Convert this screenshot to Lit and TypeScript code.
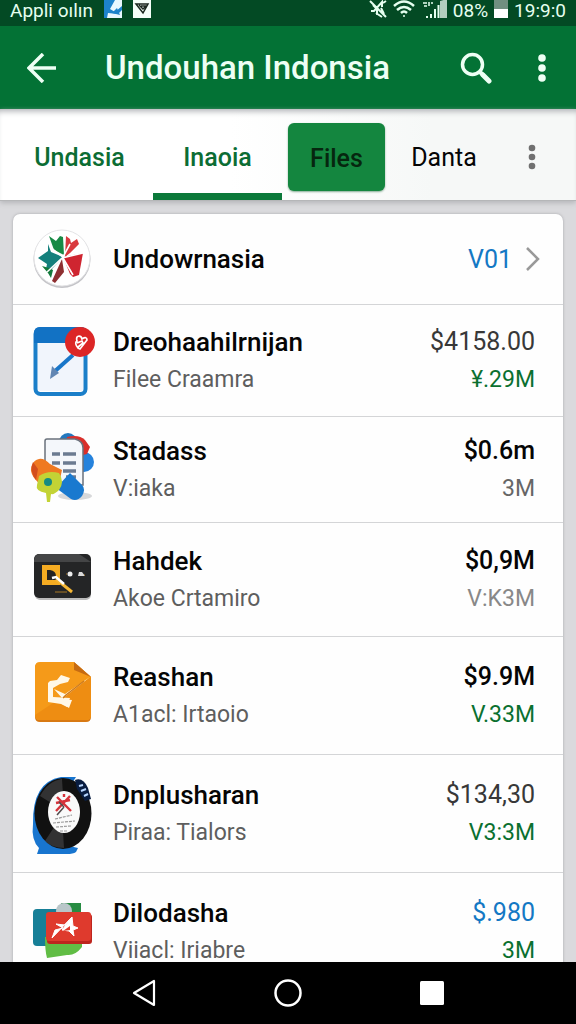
import { LitElement, html, css, svg, nothing } from "lit";
import { customElement, property } from "lit/decorators.js";

interface Entry {
  icon: string;
  title: string;
  note: string;
  amount: string;
  amountTone: string;
  size: string;
  sizeTone: string;
  density: string;
}

const entries: Entry[] = [
  { icon: "notes", title: "Dreohaahilrnijan", note: "Filee Craamra", amount: "$4158.00", amountTone: "dark", size: "¥.29M", sizeTone: "green", density: "regular" },
  { icon: "papers", title: "Stadass", note: "V:iaka", amount: "$0.6m", amountTone: "strong", size: "3M", sizeTone: "gray", density: "snug" },
  { icon: "box", title: "Hahdek", note: "Akoe Crtamiro", amount: "$0,9M", amountTone: "strong", size: "V:K3M", sizeTone: "pale", density: "medium" },
  { icon: "sketch", title: "Reashan", note: "A1acl: Irtaoio", amount: "$9.9M", amountTone: "strong", size: "V.33M", sizeTone: "green", density: "roomy" },
  { icon: "record", title: "Dnplusharan", note: "Piraa: Tialors", amount: "$134,30", amountTone: "dark", size: "V3:3M", sizeTone: "green", density: "roomy" },
  { icon: "cards", title: "Dilodasha", note: "Viiacl: Iriabre", amount: "$.980", amountTone: "blue", size: "3M", sizeTone: "green", density: "roomy" },
];

const pictures: Record<string, unknown> = {
  star: svg`
    <circle cx="32" cy="40.500" r="28.500" fill="#c4c4c8"/>
    <circle cx="32" cy="39" r="28" fill="#fff" stroke="#e4e4e6"/>
    <path d="M19 17l7 5 4-5 3 1 1 18-10-5z" fill="#188a45"/>
    <path d="M36 17l4 3 1 4 6-4 2 5-9 9-5 4z" fill="#d93a3e"/>
    <path d="M18 25l3 8 12 5-12 13-5-1 1-5-9-6 10-7z" fill="#14807c"/>
    <path d="M33 38l20-4-4 22-6 2-3-3z" fill="#cf2530"/>
    <path d="M32 40l2 13-9 11-3-2z" fill="#8e2f31"/>
    <path d="M12 47l7 2 4 2-2 8-3-5z" fill="#137a3b"/>
    <path d="M32 39l21-5M33 39l10 17M33 38l7-13M33 38L21 29M32 39L17 53" stroke="#fff" stroke-width="1.600" fill="none"/>`,
  notes: svg`
    <rect x="5.500" y="8" width="50" height="65" rx="5" fill="#fff" stroke="#1b7fc9" stroke-width="4"/>
    <path d="M4 22V12q0-6 6-6h41q6 0 6 6v10z" fill="#1272c4"/>
    <rect x="8" y="22" width="45" height="48" rx="2" fill="#f1f5fc"/>
    <path d="M43 34L24 51" stroke="#1976c9" stroke-width="4"/>
    <path d="M22 45l7 7-9 6z" fill="#6286b3"/>
    <circle cx="50" cy="21" r="15" fill="#dc2626"/>
    <path d="M48 27q-4-5-1-7c-2-6 4-6 5-2q5-3 5 1l-7 9zM47 22l5-2 1 2-5 4" fill="none" stroke="#fff" stroke-width="1.700"/>`,
  papers: svg`<g transform="translate(0 -3)">
    <ellipse cx="45" cy="69" rx="17" ry="4" fill="#d7d8da"/>
    <circle cx="38" cy="15" r="9" fill="#2378be"/>
    <circle cx="54" cy="35" r="10" fill="#2582dc"/>
    <path d="M37 10q12-3 18 3l5 7-3 7-8 2-13-9z" fill="#d92f2b"/>
    <path d="M17 12h28q8 2 8 9v37H15V14q0-2 2-2z" fill="#f4f7fb" stroke="#69717c" stroke-width="1.500"/>
    <path d="M22 27h8m3 0h13M22 36h8m3 0h13M33 44h13M36 50h10" stroke="#6b7b91" stroke-width="3.500"/>
    <path d="M40 46l12 12q4 4 0 11-5 6-11 3L26 61z" fill="#1979cf"/>
    <path d="M9 32q5-1 11 5l12 6-2 9-20 5Q-2 47 2 38q2-5 7-6z" fill="#ef7921"/>
    <path d="M3 35l5 7-2 11Q-1 44 3 35z" fill="#d34e1d"/>
    <path d="M9 49q9-6 20-3 6 9 0 17-5 5-8 4l-1 8h-3l-1-9Q5 64 7 58z" fill="#c3d335"/>
    <circle cx="18" cy="55" r="4" fill="#168b82"/></g>`,
  box: svg`<g transform="translate(0 -3)">
    <rect x="5" y="20" width="56" height="43" rx="5" fill="#bbb"/>
    <rect x="4" y="17" width="57" height="44" rx="5" fill="#242526"/>
    <path d="M4 25v-2q1-6 6-6h39l12 8z" fill="#444546"/>
    <path d="M12 28h18v20H12z" fill="#f5ac22"/>
    <path d="M17 33h3q6 1 6 6v4h-9z" fill="#272422"/>
    <path d="M26 42l16 13" stroke="#f5b735" stroke-width="3"/>
    <path d="M22 41l4-1 8 7" stroke="#fff" stroke-width="2.500" fill="none"/>
    <circle cx="40" cy="37" r="2.500" fill="#eee"/><path d="M49 35h3l3 4h-7z" fill="#d9d9d9"/>
    <path d="M36 37h1m17 1h1M25 55h12" stroke="#a77924"/></g>`,
  sketch: svg`<g transform="translate(0 -4)">
    <path d="M5 16q0-5 5-5h35l16 14v40q0 5-5 5H10q-5 0-5-5z" fill="#d87913"/>
    <path d="M5 15q0-5 5-5h34l17 15v38q0 5-5 5H10q-5 0-5-5z" fill="#f59a19"/>
    <path d="M44 10v8l17 7z" fill="#c66b12"/>
    <path d="M5 63l15-10 41-28v38q0 5-5 5H10q-5 0-5-5z" fill="#ee8d12"/>
    <path d="M20 29l7-1 4-5 9 3-2 4-8 2-7 4v9l17 1-3 9-6-3-13-2V31z" fill="#fff8e8"/>
    <path d="M60 25L32 47l10 1-3 8-8-5 1-5-8-9 11 5z" fill="#fff8e8"/>
    <path d="M54 29L36 43l-3 3" fill="none" stroke="#cf7a19" stroke-width="1.500"/></g>`,
  record: svg`
    <path d="M31 3h15L35 20 13 54l5 13 30 7-2 4q-3 2-9 2H7l2-6Q1 66 3 50 2 8 31 3z" fill="#1875cf"/>
    <ellipse cx="33" cy="39.500" rx="28.500" ry="35.500" fill="#111"/>
    <path d="M10 22Q18 7 32 5l2 32zM15 67l17-26 2 33Q22 74 15 67z" fill="#5a5b5d" opacity=".45"/>
    <path d="M45 6q8-3 13 8l3 11-6 2-8-12z" fill="#091d41"/>
    <path d="M49 12l4-1m-2 6l5-2m-2 7l4-2" stroke="#b8d7ff" stroke-width="2"/>
    <ellipse cx="34" cy="38" rx="16" ry="21" fill="#fafafa"/>
    <path d="M27 23l14 14M40 22L26 37M34 20v3M26 29l14-3" stroke="#d6333b" stroke-width="2.400"/>
    <path d="M34 33l-7 8m2-13l5 5" stroke="#514b4c" stroke-width="1.500"/>
    <path d="M25 45l17-4M23 49l22-2M26 53l15-1M30 57h8" stroke="#999" stroke-width="1.200" stroke-dasharray="3 1"/>`,
  cards: svg`
    <rect x="3" y="17" width="38" height="37" rx="4" fill="#177f97"/>
    <path d="M31 11h20v38L36 61z" fill="#278c42"/>
    <circle cx="34" cy="19" r="8" fill="#b9c6c9"/>
    <path d="M15 45h37v10q-7 9-15 8l-20 3q-2-7-2-21z" fill="#61bd45"/>
    <rect x="17" y="22" width="45" height="30" rx="3" fill="#bd251e"/>
    <rect x="16" y="20" width="45" height="29" rx="3" fill="#df3a2d"/>
    <path d="M42 25L22 46l3-8 8-2-7-4 9 1 7-8 1 9 5 2-5 2 1 6-5-5-7-1z" fill="#fff" stroke="#fff"/>
    <path d="M33 39l7-5v4z" fill="#df3a2d"/>`,
};

@customElement("list-picture")
class ListPicture extends LitElement {
  @property() name = "";
  static styles = css`
    :host { display: block; }
    .picture { display: block; width: 64px; height: 80px; overflow: visible; }
  `;
  render() {
    return html`<svg class="picture" viewBox="0 0 64 80" aria-hidden="true">${pictures[this.name] ?? nothing}</svg>`;
  }
}

@customElement("app-root")
class AppRoot extends LitElement {
  static styles = css`
    :host {
      display: flex;
      flex-direction: column;
      height: 100vh;
      overflow: hidden;
      background: #dadadd;
      color: #050505;
      font-family: Roboto, "Liberation Sans", sans-serif;
    }
    * { box-sizing: border-box; }
    button { border: 0; padding: 0; background: none; color: inherit; font: inherit; cursor: pointer; }
    svg { display: block; }
    .status {
      flex: none;
      display: flex;
      align-items: flex-start;
      justify-content: space-between;
      height: 26px;
      padding: 0 10px;
      background: #034a24;
      color: #e6fff0;
      font-size: 19px;
      line-height: 22px;
      white-space: nowrap;
    }
    .group { display: flex; align-items: flex-start; gap: 6px; }
    .group.left { gap: 11px; }
    .bar {
      flex: none;
      display: flex;
      align-items: center;
      height: 83px;
      padding: 0 10px 0 18px;
      background: #037235;
      color: #edfff4;
    }
    .heading { flex: 1; margin: 0 0 0 39px; font-size: 33px; line-height: 40px; font-weight: 500; white-space: nowrap; }
    .tool { width: 48px; height: 48px; display: grid; place-items: center; }
    .tools { display: flex; gap: 18px; }
    .tabs {
      flex: none;
      position: relative;
      display: grid;
      grid-template-columns: 147fr 129fr 109fr 106fr 69fr;
      height: 92px;
      padding: 0 10px 0 6px;
      background: linear-gradient(90deg, #fff 40%, #f6f8f7 75%);
      border-bottom: 1px solid #b5b6b8;
      box-shadow: inset 0 6px 6px -4px #a9acb0, 0 2px 5px #b4b5b9;
      font-size: 25px;
    }
    .tab { display: grid; place-items: center; padding-top: 12px; border-bottom: 7px solid transparent; }
    .tab.green { color: #0c6d34; font-weight: 500; }
    .tab.current { border-bottom-color: #0b793a; }
    .tab.chip {
      margin: 14px 6px 9px;
      padding: 2px 0 0;
      border: 0;
      border-radius: 6px;
      background: #14863f;
      color: #06260f;
      font-weight: 500;
      box-shadow: 0 1px 2px #86ad95;
    }
    .tab.more { color: #707070; }
    .content { flex: 1; min-height: 0; overflow: hidden auto; scrollbar-width: none; padding: 13px 13px 0; }
    .card {
      margin: 0;
      padding: 0;
      list-style: none;
      background: #fefefe;
      border-radius: 7px;
      box-shadow: 0 0 3px #a5a6aa;
    }
    .row { display: flex; align-items: center; padding: 0 28px 0 17px; border-bottom: 1px solid #d4d5d7; }
    .row:last-child { border-bottom: 0; }
    .row list-picture { flex: none; height: 80px; margin: -4px 19px -4px 0; }
    .row.first { height: 91px; padding-right: 23px; }
    .row.snug { padding-block: 15px; }
    .row.regular { padding-block: 18px; }
    .row.medium { padding-block: 19px; }
    .row.roomy { padding-block: 21px; }
    .names { flex: 1; min-width: 0; white-space: nowrap; }
    .values { text-align: right; white-space: nowrap; }
    .title, .amount { line-height: 38px; }
    .title { margin: 0; font-size: 26px; }
    .amount { font-size: 25px; }
    .title, .strong { font-weight: 500; }
    .note, .size { font-size: 23px; line-height: 37px; }
    .note { color: #5e5e5e; }
    .dark { color: #383838; }
    .strong { color: #050505; }
    .gray { color: #666; }
    .pale { color: #888; }
    .green { color: #0a7030; }
    .blue { color: #1478c4; }
    .link { display: flex; align-items: center; gap: 13px; font-size: 25px; color: #1478c4; text-decoration: none; }
    .nav { flex: none; display: flex; justify-content: center; height: 62px; background: #000; color: #fff; }
    .key { width: 25%; display: grid; place-items: center; }
  `;

  render() {
    return html`
      <div class="status">
        <div class="group left">
          <span>Appli oılın</span>
          <svg width="18" height="18" viewBox="0 0 18 18" aria-hidden="true">
            <path fill="#1d83cc" d="M0 0h18v18H0z"/><path fill="#e9f8ff" d="M11 0h7v6l-7 6-5-3zM4 13l10 1 4-4v8H3z"/><path fill="#1d83cc" d="M13 8l3 7-8-2z"/>
          </svg>
          <svg width="18" height="18" viewBox="0 0 18 18" aria-hidden="true">
            <path fill="#f4fff8" d="M0 0h18v18H0z"/><path d="M3 4h12l-5 9zM6 5l4 4 3-3H8" fill="none" stroke="#18271d" stroke-width="1.500"/>
          </svg>
        </div>
        <div class="group">
          <svg width="18" height="18" viewBox="0 0 18 18" fill="none" stroke="currentColor" stroke-width="2" aria-hidden="true">
            <path d="M1 1l16 16M2 11h3l8-9v5M4 5l4 4v6M12 8l3 6M14 3l3-2M7 13l6 4"/>
          </svg>
          <svg width="23" height="18" viewBox="0 0 23 18" fill="none" stroke="currentColor" stroke-width="2.500" aria-hidden="true">
            <path d="M1 6q10-9 20 0M4 10q7-6 14 0M8 13q3-3 6 0"/><circle cx="11" cy="16" r="1" fill="currentColor" stroke="none"/>
          </svg>
          <svg width="25" height="18" viewBox="0 0 25 18" aria-hidden="true">
            <path d="M18 1l7-2v19h-7z" fill="#b3cfbf"/><path d="M4 17h2M9 18v-4M13 18V9M16.500 18V5" stroke="currentColor" stroke-width="2"/><path d="M1 3h4M2 6h3M7 2v4M9 3h2" stroke="currentColor" stroke-width="1.500"/>
          </svg>
          <span>08%</span>
          <svg width="14" height="18" viewBox="0 0 14 18" aria-hidden="true"><path fill="#718f80" d="M0 0h14v9H0z"/><path fill="#fff" d="M0 9h14v9H0z"/></svg>
          <span>19:9:0</span>
        </div>
      </div>
      <header class="bar">
        <button class="tool" aria-label="Back">
          <svg width="30" height="30" viewBox="0 0 30 30" fill="none" stroke="currentColor" stroke-width="3.500"><path d="M16 1L2 15l14 14M2 15h27"/></svg>
        </button>
        <h1 class="heading">Undouhan Indonsia</h1>
        <div class="tools">
          <button class="tool" aria-label="Search">
            <svg width="32" height="32" viewBox="0 0 32 32" fill="none" stroke="currentColor"><circle cx="12.500" cy="12.500" r="10" stroke-width="3.500"/><path d="M20 20l3 3" stroke-width="4"/><path d="M23 23l6 6" stroke-width="5" stroke-linecap="round"/></svg>
          </button>
          <button class="tool" aria-label="More options">
            <svg width="8" height="28" viewBox="0 0 8 28" fill="currentColor"><circle cx="4" cy="4" r="3.800"/><circle cx="4" cy="14" r="3.800"/><circle cx="4" cy="24" r="3.800"/></svg>
          </button>
        </div>
      </header>
      <nav class="tabs">
        <button class="tab green">Undasia</button>
        <button class="tab green current">Inaoia</button>
        <button class="tab chip">Files</button>
        <button class="tab">Danta</button>
        <button class="tab more" aria-label="More tabs">
          <svg width="8" height="26" viewBox="0 0 8 26" fill="currentColor"><circle cx="4" cy="4" r="3.300"/><circle cx="4" cy="13" r="3.300"/><circle cx="4" cy="22" r="3.300"/></svg>
        </button>
      </nav>
      <main class="content">
        <ul class="card">
          <li class="row first">
            <list-picture name="star"></list-picture>
            <h2 class="names title">Undowrnasia</h2>
            <a class="link" href="#v01">V01
              <svg width="15" height="24" viewBox="0 0 15 24" fill="none" stroke="#999" stroke-width="2.500"><path d="M2 1l11 11L2 23"/></svg>
            </a>
          </li>
          ${entries.map((entry) => html`
            <li class="row ${entry.density}">
              <list-picture name=${entry.icon}></list-picture>
              <div class="names">
                <h2 class="title">${entry.title}</h2>
                <div class="note">${entry.note}</div>
              </div>
              <div class="values">
                <div class="amount ${entry.amountTone}">${entry.amount}</div>
                <div class="size ${entry.sizeTone}">${entry.size}</div>
              </div>
            </li>`)}
        </ul>
      </main>
      <footer class="nav">
        <button class="key" aria-label="Back"><svg width="24" height="28" viewBox="0 0 24 28" fill="none" stroke="currentColor" stroke-width="2.200" stroke-linejoin="round"><path d="M22 2v24L2 14z"/></svg></button>
        <button class="key" aria-label="Home"><svg width="28" height="28" viewBox="0 0 28 28" fill="none" stroke="currentColor" stroke-width="2.500"><circle cx="14" cy="14" r="12.500"/></svg></button>
        <button class="key" aria-label="Recent apps"><svg width="24" height="24" viewBox="0 0 24 24" fill="currentColor"><rect width="24" height="24" rx="1.500"/></svg></button>
      </footer>
    `;
  }
}
